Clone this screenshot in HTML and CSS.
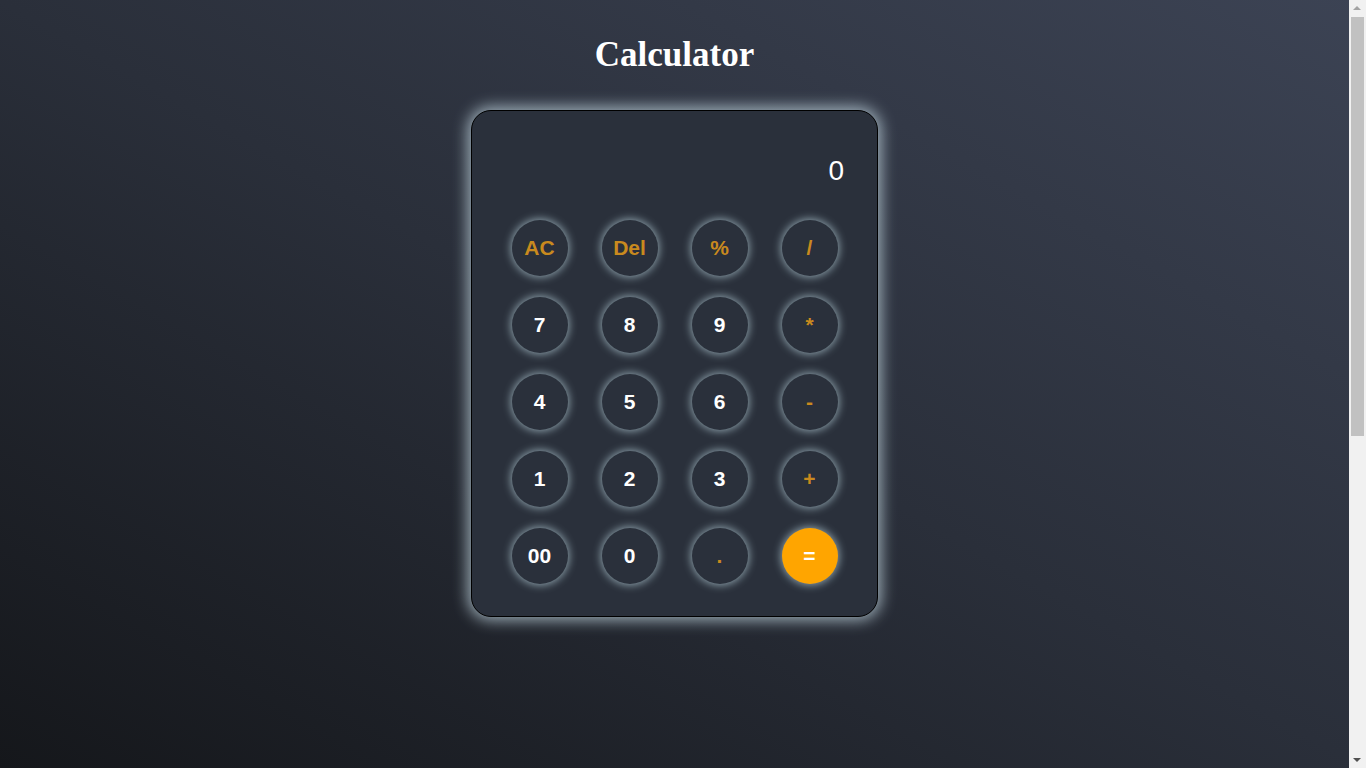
FILE: index.html
```html
<!DOCTYPE html>
<html lang="en">
<head>
<meta charset="utf-8">
<title>Calculator</title>
<link rel="stylesheet" href="styles.css">
</head>
<body>
<main class="page">
  <h1 class="title">Calculator</h1>
  <div class="calc">
    <div class="display">0</div>
    <div class="keys">
      <button class="key op">AC</button>
      <button class="key op">Del</button>
      <button class="key op">%</button>
      <button class="key op">/</button>
      <button class="key">7</button>
      <button class="key">8</button>
      <button class="key">9</button>
      <button class="key op">*</button>
      <button class="key">4</button>
      <button class="key">5</button>
      <button class="key">6</button>
      <button class="key op">-</button>
      <button class="key">1</button>
      <button class="key">2</button>
      <button class="key">3</button>
      <button class="key op">+</button>
      <button class="key">00</button>
      <button class="key">0</button>
      <button class="key op">.</button>
      <button class="key equal">=</button>
    </div>
  </div>
</main>
<div class="scrollbar">
  <div class="arrow up"></div>
  <div class="track"><div class="thumb"></div></div>
  <div class="arrow down"></div>
</div>
</body>
</html>
```
FILE: styles.css
```css
html, body {
  margin: 0;
  padding: 0;
  height: 100%;
  overflow: hidden;
}
body {
  background: linear-gradient(to top right, #15171b 0%, #2a2f3a 50%, #3c4354 100%);
  font-family: "Liberation Sans", Arial, sans-serif;
}
.page {
  display: flex;
  flex-direction: column;
  align-items: center;
  padding-top: 35px;
  margin-right: 17px;
}
.title {
  margin: 0;
  font-family: "Liberation Serif", "Times New Roman", serif;
  font-weight: bold;
  font-size: 35px;
  line-height: 40px;
  color: #ffffff;
}
.calc {
  margin-top: 35px;
  width: 405px;
  box-sizing: content-box;
  border: 1px solid #000;
  border-radius: 20px;
  background: #2a303b;
  box-shadow: 0 0 15px 3px rgba(190, 210, 220, 0.8);
  padding: 44px 0 32px;
}
.display {
  padding: 0 33px;
  text-align: right;
  font-size: 28px;
  line-height: 32px;
  color: #ffffff;
}
.keys {
  margin-top: 33px;
  display: grid;
  grid-template-columns: repeat(4, 56px);
  grid-auto-rows: 56px;
  column-gap: 34px;
  row-gap: 21px;
  justify-content: center;
}
.key {
  width: 56px;
  height: 56px;
  border: none;
  border-radius: 50%;
  background: #2a303b;
  color: #ffffff;
  font-family: "Liberation Sans", Arial, sans-serif;
  font-weight: bold;
  font-size: 21px;
  padding: 0;
  display: flex;
  align-items: center;
  justify-content: center;
  box-shadow: 0 0 8px 1px rgba(180, 205, 215, 0.75);
}
.key.op {
  color: #c98a1e;
}
.key.equal {
  background: #ffa500;
  color: #ffffff;
}
.scrollbar {
  position: fixed;
  top: 0;
  right: 0;
  width: 17px;
  height: 100vh;
  background: #f1f1f1;
  display: flex;
  flex-direction: column;
}
.arrow {
  height: 17px;
  flex: none;
  position: relative;
}
.arrow::after {
  content: "";
  position: absolute;
  left: 4px;
  width: 0;
  height: 0;
  border-left: 4px solid transparent;
  border-right: 4px solid transparent;
}
.arrow.up::after {
  top: 6px;
  border-bottom: 4px solid #a3a3a3;
}
.arrow.down::after {
  top: 7px;
  border-top: 4px solid #505050;
}
.track {
  flex: 1;
  padding: 0 2px;
}
.thumb {
  height: 419px;
  background: #c1c1c1;
}
```
